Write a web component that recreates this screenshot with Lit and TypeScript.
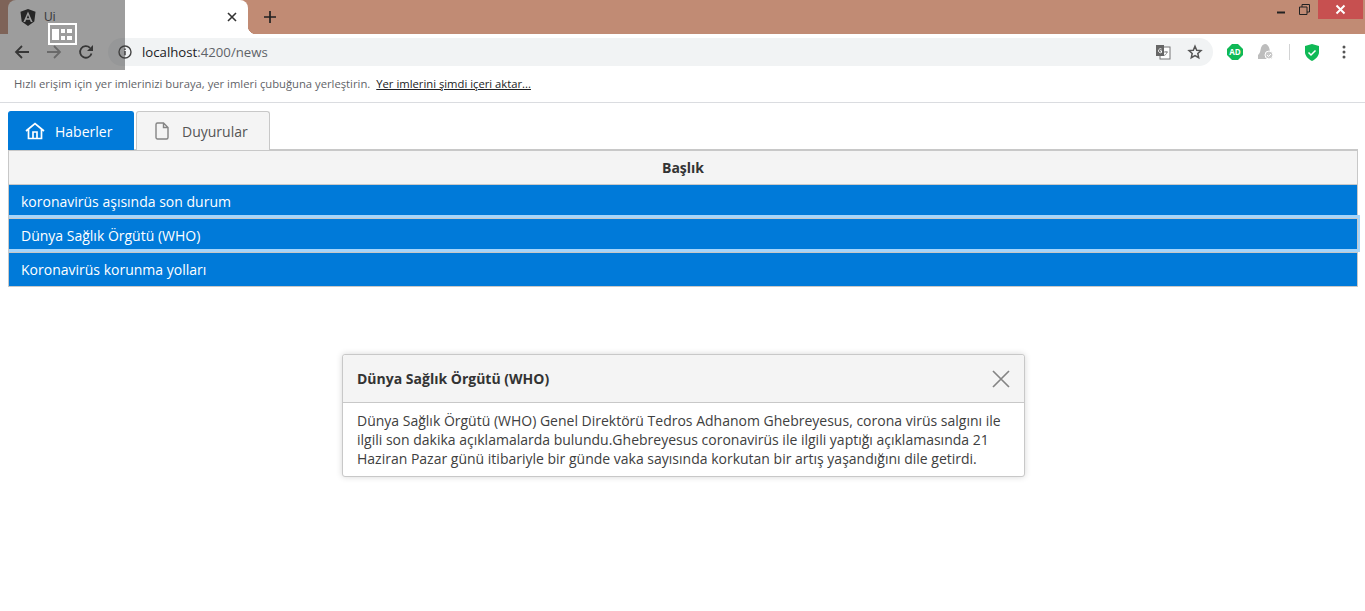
import { LitElement, css, html } from "lit";
import { customElement, state } from "lit/decorators.js";

const NEWS = [
  "koronavirüs aşısında son durum",
  "Dünya Sağlık Örgütü (WHO)",
  "Koronavirüs korunma yolları",
];

@customElement("app-root")
export class AppRoot extends LitElement {
  @state() selected = 1;

  static styles = css`
    :host {
      display: block;
      position: relative;
      height: 611px;
      overflow: hidden;
      background: #fff;
      font-family: "Open Sans", sans-serif;
      font-size: 14px;
      color: #333;
    }
    svg {
      display: block;
      flex: none;
    }

    /* browser frame */
    .frame {
      display: flex;
      height: 34px;
      padding-left: 8px;
      background: #c18b74;
    }
    .tab {
      position: relative;
      box-sizing: border-box;
      width: 240px;
      display: flex;
      align-items: center;
      gap: 8px;
      padding: 0 11px 0 12px;
      background: #fff;
      border-radius: 8px 8px 0 0;
      font-size: 12px;
      color: #3c4043;
    }
    .tab::after {
      content: "";
      position: absolute;
      right: -8px;
      bottom: 0;
      width: 8px;
      height: 8px;
      background: radial-gradient(circle at 100% 0, transparent 8px, #fff 8.5px);
    }
    .tab-title {
      flex: 1;
      font-family: "Liberation Sans", sans-serif;
    }
    .new-tab {
      width: 44px;
      display: flex;
      align-items: center;
      justify-content: center;
    }
    .window-buttons {
      margin-left: auto;
      display: flex;
      align-items: flex-start;
      padding-right: 2px;
    }
    .win {
      box-sizing: border-box;
      height: 19px;
      width: 25px;
      display: flex;
      align-items: center;
      justify-content: center;
    }
    .win.restore {
      padding-right: 2px;
    }
    .win.close {
      width: 45px;
      background: #c75050;
    }

    /* toolbar */
    .toolbar {
      display: flex;
      align-items: center;
      height: 35px;
      box-sizing: border-box;
      padding: 1px 13px 0 12px;
      background: #fff;
    }
    .nav {
      width: 32px;
      display: flex;
      justify-content: center;
    }
    .nav:first-child {
      margin-left: -6px;
    }
    .omnibox {
      flex: 1;
      height: 28px;
      margin-left: 6px;
      display: flex;
      align-items: center;
      padding: 0 10px;
      background: #f1f3f4;
      border-radius: 14px;
      font-size: 13.2px;
      color: #5f6368;
    }
    .omnibox .host {
      color: #202124;
    }
    .url {
      flex: 1;
      margin-left: 10px;
    }
    .omni-icons {
      display: flex;
      gap: 16px;
      align-items: center;
    }
    .extensions {
      display: flex;
      align-items: center;
      margin-left: 14px;
      gap: 14px;
    }
    .sep {
      width: 1px;
      height: 16px;
      background: #d2d3d4;
    }
    .menu {
      margin-left: 2px;
    }

    /* bookmarks */
    .bookmarks {
      display: flex;
      align-items: center;
      gap: 6px;
      height: 29px;
      padding: 0 0 4px 14px;
      border-bottom: 1px solid #dadce0;
      font-size: 11.25px;
      color: #5f6368;
    }
    .bookmarks a {
      color: #202124;
      text-decoration: underline;
    }

    /* page */
    .page {
      padding: 8px 7px 0 8px;
    }
    .tabs {
      display: flex;
      gap: 2px;
    }
    .page-tab {
      position: relative;
      box-sizing: border-box;
      height: 39px;
      display: flex;
      align-items: center;
      gap: 10px;
      padding-left: 16px;
      width: 126px;
      background: #f4f4f4;
      border: 1px solid #c8c8c8;
      border-bottom: none;
      border-radius: 3px 3px 0 0;
      color: #555;
    }
    .page-tab.active {
      background: #007ad9;
      border-color: #007ad9;
      color: #fff;
    }
    .page-tab.second {
      width: 134px;
      padding-left: 18px;
      gap: 13px;
    }
    .table {
      margin-top: -1px;
      border: 1px solid #c8c8c8;
      border-top-width: 2px;
    }
    .head {
      height: 33px;
      line-height: 33px;
      text-align: center;
      font-weight: 700;
      background: #f4f4f4;
      border-bottom: 1px solid #c8c8c8;
    }
    .row {
      position: relative;
      height: 33px;
      line-height: 33px;
      padding-left: 12px;
      background: #007ad9;
      color: #fff;
      border-bottom: 1px solid #c8c8c8;
      cursor: pointer;
    }
    .row:last-child {
      border-bottom: none;
    }
    .row.focused::before {
      content: "";
      position: absolute;
      left: 0;
      right: -3px;
      top: -4px;
      bottom: 0;
      border: solid #a6d5fa;
      border-width: 3px 2px 3px 0;
      pointer-events: none;
    }

    /* dialog */
    .dialog {
      position: absolute;
      left: 342px;
      top: 354px;
      width: 683px;
      box-sizing: border-box;
      border: 1px solid #c8c8c8;
      border-radius: 3px;
      box-shadow: 0 0 6px rgba(0, 0, 0, 0.16);
      background: #fff;
    }
    .dialog-head {
      height: 47px;
      display: flex;
      align-items: center;
      justify-content: space-between;
      padding: 0 14px;
      background: #f4f4f4;
      border-bottom: 1px solid #c8c8c8;
      border-radius: 3px 3px 0 0;
      font-weight: 700;
    }
    .dialog-body {
      padding: 8px 14px;
      line-height: 19px;
      color: #404040;
    }

    /* screen overlay in the corner */
    .snap {
      position: absolute;
      left: 0;
      top: 0;
      width: 125px;
      height: 70px;
      background: rgba(60, 60, 60, 0.5);
    }
    .snap svg {
      position: absolute;
      left: 48px;
      top: 23px;
    }
  `;

  render() {
    return html`
      <div class="frame">
        <div class="tab">
          <svg width="16" height="17" viewBox="0 0 16 17">
            <path d="M8 0 15.5 2.7 14.3 12.6 8 17 1.7 12.6.5 2.7Z" fill="#111" />
            <path d="M8 2.5 3.4 13h1.8l.9-2.3h3.8l.9 2.3h1.8ZM6.7 9.2 8 6l1.3 3.2Z" fill="#fff" />
          </svg>
          <span class="tab-title">Ui</span>
          <svg width="10" height="10" viewBox="0 0 10 10">
            <path d="M1 1 9 9M9 1 1 9" stroke="#333" stroke-width="1.6" />
          </svg>
        </div>
        <div class="new-tab">
          <svg width="12" height="12" viewBox="0 0 12 12">
            <path d="M6 0V12M0 6H12" stroke="#222" stroke-width="1.7" />
          </svg>
        </div>
        <div class="window-buttons">
          <div class="win">
            <svg width="10" height="10" viewBox="0 0 10 10"><path d="M1 7.5H9" stroke="#222" stroke-width="2" /></svg>
          </div>
          <div class="win restore">
            <svg width="11" height="11" viewBox="0 0 11 11">
              <path d="M.5 3H8V10.500H.5ZM3 3V.5H10.500V8H8" fill="none" stroke="#222" stroke-width="1" />
            </svg>
          </div>
          <div class="win close">
            <svg width="11" height="11" viewBox="0 0 11 11">
              <path d="M1.500 1.500 9.500 9.500M9.500 1.500 1.500 9.500" stroke="#fff" stroke-width="2" />
            </svg>
          </div>
        </div>
      </div>

      <div class="toolbar">
        <div class="nav">
          <svg width="16" height="16" viewBox="0 0 16 16">
            <path d="M15 8H2M8 2 2 8l6 6" fill="none" stroke="#333" stroke-width="1.8" />
          </svg>
        </div>
        <div class="nav">
          <svg width="16" height="16" viewBox="0 0 16 16">
            <path d="M1 8H14M8 2l6 6-6 6" fill="none" stroke="#999" stroke-width="1.8" />
          </svg>
        </div>
        <div class="nav">
          <svg width="16" height="16" viewBox="0 0 16 16">
            <path d="M13.500 9.500A5.800 5.800 0 1 1 12 3.800" fill="none" stroke="#333" stroke-width="1.800" />
            <path d="M15 1v6H9Z" fill="#333" />
          </svg>
        </div>
        <div class="omnibox">
          <svg width="14" height="14" viewBox="0 0 14 14">
            <circle cx="7" cy="7" r="6" fill="none" stroke="#444" stroke-width="1.400" />
            <path d="M7 6v4.200M7 3.600v1.400" stroke="#444" stroke-width="1.500" />
          </svg>
          <span class="url"><span class="host">localhost</span>:4200/news</span>
          <div class="omni-icons">
            <svg width="16" height="16" viewBox="0 0 16 16">
              <rect x="5" y="3" width="10" height="12" fill="#fff" stroke="#777" />
              <rect x="1" y="1" width="8" height="11" fill="#666" />
              <path d="M6.500 5A2 2 0 1 0 6.500 8.500V6.800H5" fill="none" stroke="#fff" />
              <path d="M9 8h4M11 7v1M12 8c-.5 2-1.500 3-3 3.500" fill="none" stroke="#777" stroke-width=".8" />
            </svg>
            <svg width="16" height="16" viewBox="0 0 16 16">
              <path d="M8 2.200 9.700 6.200l4.300.4-3.200 2.900.9 4.200L8 11.500 4.300 13.700l.9-4.200L2 6.600l4.300-.4Z" fill="none" stroke="#555" stroke-width="1.500" />
            </svg>
          </div>
        </div>
        <div class="extensions">
          <svg width="16" height="16" viewBox="0 0 16 16">
            <path d="M5 0h6l5 5v6l-5 5H5L0 11V5Z" fill="#10b956" />
            <text x="8" y="11" text-anchor="middle" font-family="Open Sans" font-size="8" font-weight="700" fill="#fff">AD</text>
          </svg>
          <svg width="18" height="18" viewBox="0 0 18 18">
            <path d="M1 16V12C2 11 3 10 3.500 7C4 3 6 1 8 1s4 2 4.500 5L13 9 8 16Z" fill="#bdbdbd" />
            <path d="M1 16h14v-3H8Z" fill="#bdbdbd" />
            <circle cx="12" cy="12" r="4" fill="#c9c9c9" stroke="#fff" />
            <path d="M10 12l1.500 1.500L14 11" fill="none" stroke="#fff" />
          </svg>
          <div class="sep"></div>
          <svg width="16" height="17" viewBox="0 0 16 17">
            <path d="M8 0 15 2V8C15 12 12 15 8 17 4 15 1 12 1 8V2Z" fill="#10b956" />
            <path d="M4.500 8.500 7 11l4.500-4.500" fill="none" stroke="#fff" stroke-width="1.500" />
          </svg>
          <svg class="menu" width="16" height="16" viewBox="0 0 16 16">
            <circle cx="8" cy="3" r="1.500" fill="#555" />
            <circle cx="8" cy="8" r="1.500" fill="#555" />
            <circle cx="8" cy="13" r="1.500" fill="#555" />
          </svg>
        </div>
      </div>

      <div class="bookmarks">
        <span>Hızlı erişim için yer imlerinizi buraya, yer imleri çubuğuna yerleştirin.</span>
        <a>Yer imlerini şimdi içeri aktar...</a>
      </div>

      <div class="page">
        <div class="tabs">
          <div class="page-tab active">
            <svg width="20" height="18" viewBox="0 0 20 18">
              <path d="M1 9 10 1.500 19 9M3.500 7V16.500H16.500V7M8 16.500V10H12V16.500" fill="none" stroke="#fff" stroke-width="1.700" />
            </svg>
            Haberler
          </div>
          <div class="page-tab second">
            <svg width="14" height="18" viewBox="0 0 14 18">
              <path d="M1 2.500A1.500 1.500 0 0 1 2.500 1H8.500L13 5.500V15.500A1.500 1.500 0 0 1 11.500 17H2.500A1.500 1.500 0 0 1 1 15.500ZM8.500 1V5.500H13" fill="none" stroke="#848484" stroke-width="1.400" />
            </svg>
            Duyurular
          </div>
        </div>
        <div class="table">
          <div class="head">Başlık</div>
          ${NEWS.map(
            (title, i) =>
              html`<div class="row ${i === this.selected ? "focused" : ""}" @click=${() => (this.selected = i)}>${title}</div>`
          )}
        </div>
      </div>

      <div class="dialog">
        <div class="dialog-head">
          <span>${NEWS[this.selected]}</span>
          <svg width="18" height="18" viewBox="0 0 18 18">
            <path d="M1 1 17 17M17 1 1 17" stroke="#848484" stroke-width="1.700" />
          </svg>
        </div>
        <div class="dialog-body">
          Dünya Sağlık Örgütü (WHO) Genel Direktörü Tedros Adhanom Ghebreyesus, corona virüs salgını ile ilgili son dakika açıklamalarda bulundu.Ghebreyesus coronavirüs ile ilgili yaptığı açıklamasında 21 Haziran Pazar günü itibariyle bir günde vaka sayısında korkutan bir artış yaşandığını dile getirdi.
        </div>
      </div>

      <div class="snap">
        <svg width="29" height="22" viewBox="0 0 29 22" fill="#fff">
          <path d="M0 0H29V22H0ZM2 2V20H27V2Z" fill-rule="evenodd" />
          <rect x="4" y="6" width="7" height="11" />
          <rect x="13" y="6" width="4" height="4" />
          <rect x="19" y="6" width="5" height="4" />
          <rect x="13" y="13" width="4" height="4" />
          <rect x="19" y="13" width="5" height="4" />
        </svg>
      </div>
    `;
  }
}
